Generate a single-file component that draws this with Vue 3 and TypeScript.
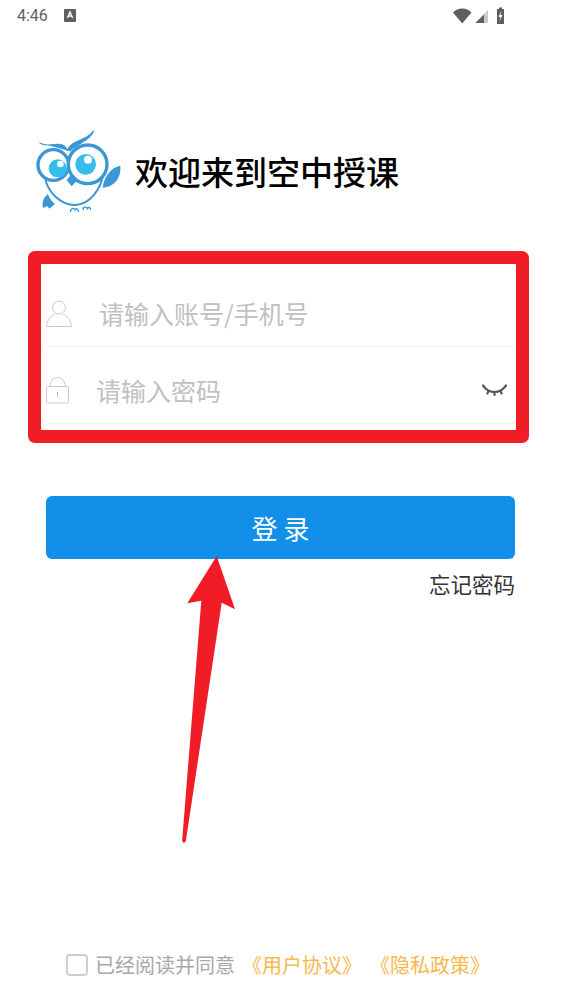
<script setup lang="ts">
import { ref } from "vue";

const account = ref("");
const password = ref("");
const agreed = ref(false);
</script>

<template>
  <div class="page">
    <div class="status-bar">
      <span class="time">4:46</span>
      <svg class="status-a" width="12" height="13" viewBox="0 0 12 13">
        <rect width="12" height="13" rx="1" fill="#5f5f5f" />
        <path d="M3.4 9 6 3l2.6 6M4.4 7h3.2" fill="none" stroke="#fff" stroke-width="1.3" />
      </svg>
      <span class="status-space"></span>
      <svg width="53" height="17" viewBox="0 0 53 17">
        <path d="M0 5.500C2.500 3 5.500 1.500 9.200 1.500S16 3 18.500 5.500L9.200 16.500Z" fill="#5f5f5f" />
        <path d="M35 3v13H22Z" fill="#c9c9c9" />
        <path d="M31 7.500V16H22.500Z" fill="#5f5f5f" />
        <path d="M44 2h2V.5h3V2h2v15h-7Z" fill="#5f5f5f" />
        <path d="M48.500 3.500 45.500 10h2l-1 4.500 3-6.500h-2Z" fill="#fff" />
      </svg>
    </div>

    <header class="welcome">
      <svg class="logo" width="87" height="82" viewBox="45 30 261 246">
        <path d="M75 172C82 215 120 254 165 255C210 254 245 205 250 158" fill="#fff" stroke="#3a97d6" stroke-width="6" />
        <path d="M58 68C80 84 110 66 130 76C138 80 141 86 142 92C150 60 198 64 221 32C214 60 172 70 150 94" fill="#3a97d6" stroke="#3a97d6" stroke-width="3" stroke-linejoin="round" />
        <circle cx="100" cy="135" r="46" fill="#fff" stroke="#3a97d6" stroke-width="10" />
        <circle cx="203" cy="133" r="58" fill="#fff" stroke="#3a97d6" stroke-width="10" />
        <circle cx="113" cy="145" r="27" fill="#35bdee" />
        <circle cx="197" cy="133" r="31" fill="#35bdee" />
        <circle cx="121" cy="132" r="10" fill="#fff" />
        <circle cx="204" cy="119" r="12" fill="#fff" />
        <path d="M155 162 170 183 155 199 140 181Z" fill="#3a97d6" />
        <path d="M301 137C303 165 292 198 248 203C252 172 268 145 301 137Z" fill="#3a97d6" />
        <path d="M84 222C66 235 66 255 70 264L82 258 88 266 105 252C96 245 88 235 84 222Z" fill="#3a97d6" />
        <path d="M152 276V270C156 264 162 264 166 270C168 264 174 264 176 276M190 270V264C194 260 200 260 202 266C206 260 212 262 212 270" fill="none" stroke="#3a97d6" stroke-width="4" />
      </svg>
      <h1 class="title">欢迎来到空中授课</h1>
    </header>

    <form class="login-form" @submit.prevent>
      <label class="field">
        <svg class="icon-user" width="26" height="27" viewBox="0 0 26 27">
          <circle cx="13" cy="7.500" r="6.500" fill="none" stroke="#c9c9c9" />
          <path d="M.5 26.500C1 20 5 15.500 9 14.500M25.500 26.500C25 20 21 15.500 17 14.500M.5 26.500h25" fill="none" stroke="#c9c9c9" />
        </svg>
        <input v-model="account" class="field-input" type="text" placeholder="请输入账号/手机号" />
      </label>
      <label class="field">
        <svg class="icon-lock" width="23" height="27" viewBox="0 0 23 27">
          <rect x=".5" y="9.500" width="22" height="16.500" rx="1" fill="none" stroke="#c9c9c9" />
          <path d="M4 9.500C4 4 7 .5 11.500 .5S19 4 19 9.500" fill="none" stroke="#c9c9c9" />
          <path d="M11.500 15v5" stroke="#b5b5b5" />
        </svg>
        <input v-model="password" class="field-input" type="password" placeholder="请输入密码" />
        <svg class="icon-eye" width="25" height="13" viewBox="0 0 25 13">
          <path d="M1 1.500C5 7 8 8 12.500 8S20 7 24 1.500M6.500 6.500 5.500 9.500M12.500 8V11M18.500 6.500 19.500 9.500" fill="none" stroke="#555" stroke-width="2.200" stroke-linecap="round" />
        </svg>
      </label>
      <button class="submit" type="submit">登 录</button>
      <a class="forgot">忘记密码</a>
    </form>

    <footer class="agreement">
      <input v-model="agreed" class="check" type="checkbox" />
      <span class="agree-text">已经阅读并同意</span>
      <a class="policy">《用户协议》</a>
      <a class="policy policy-last">《隐私政策》</a>
    </footer>

    <!-- red marks drawn over the screenshot -->
    <div class="mark-box"></div>
    <svg class="mark-arrow" width="561" height="996" viewBox="0 0 561 996">
      <path d="M216.700 556 187.300 603.300 201.300 600.700 182.200 840C182 843.500 185.500 843.500 186 840L221.700 602.700 235 609.300Z" fill="#f01d27" />
    </svg>
  </div>
</template>

<style scoped>
.page {
  position: relative;
  display: flex;
  flex-direction: column;
  height: 996px;
  overflow: hidden;
  background: #fff;
  font-family: "Noto Sans CJK SC", "Noto Sans", sans-serif;
}

.status-bar {
  display: flex;
  align-items: center;
  height: 30px;
  padding: 0 55px 0 17px;
  color: #5f5f5f;
}

.time {
  font-family: Roboto, sans-serif;
  font-size: 16px;
}

.status-a {
  margin-left: 16px;
}

.status-space {
  flex: 1;
}

.welcome {
  display: flex;
  align-items: center;
  gap: 13px;
  margin: 100px 0 0 35px;
}

.logo {
  flex: none;
}

.title {
  margin: 0;
  font-size: 33px;
  line-height: 46px;
  font-weight: 500;
  color: #000;
}

.login-form {
  display: flex;
  flex-direction: column;
  margin-top: 58px;
  padding: 0 46px;
}

.field {
  display: flex;
  align-items: center;
  box-sizing: border-box;
  height: 77px;
  padding-top: 10px;
  border-bottom: 1px solid #efefef;
}

.field-input {
  flex: 1;
  min-width: 0;
  padding: 0;
  border: 0;
  outline: 0;
  background: transparent;
  font-family: inherit;
  font-size: 25px;
  color: #333;
}

.field-input::placeholder {
  color: #c0c0c0;
}

.icon-user {
  margin-right: 27px;
  flex: none;
}

.icon-lock {
  margin-right: 27px;
  flex: none;
}

.icon-eye {
  flex: none;
  margin: 0 8px 0 0;
}

.submit {
  height: 63px;
  margin-top: 72px;
  border: 0;
  border-radius: 6px;
  background: #118fe9;
  color: #fff;
  font-family: inherit;
  font-size: 26px;
}

.forgot {
  align-self: flex-end;
  margin-top: 9px;
  font-size: 21.5px;
  line-height: 32px;
  color: #333;
}

.agreement {
  display: flex;
  align-items: center;
  margin-top: auto;
  margin-bottom: 20px;
  padding-left: 66px;
  font-size: 20px;
  line-height: 22px;
}

.check {
  appearance: none;
  width: 22px;
  height: 22px;
  margin: 0 7px 0 0;
  border: 2px solid #cfcfcf;
  border-radius: 4px;
  background: #fff;
}

.agree-text {
  color: #a8a8a8;
}

.policy {
  margin-left: 7px;
  color: #f8b84a;
}

.policy-last {
  margin-left: 8px;
}

.mark-box {
  position: absolute;
  left: 28px;
  top: 251px;
  width: 501px;
  height: 192px;
  box-sizing: border-box;
  border: 13px solid #f01d27;
  border-radius: 7px;
  pointer-events: none;
}

.mark-arrow {
  position: absolute;
  left: 0;
  top: 0;
  pointer-events: none;
}
</style>
